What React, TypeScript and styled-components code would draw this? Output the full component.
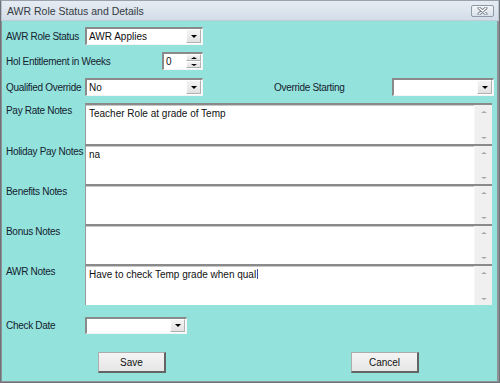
import styled, { createGlobalStyle } from 'styled-components';

const GlobalStyle = createGlobalStyle`
  html, body {
    margin: 0;
    padding: 0;
    background: #ffffff;
  }
  body {
    font-family: 'Liberation Sans', Arial, sans-serif;
  }
`;

const Window = styled.div`
  width: 500px;
  height: 383px;
  box-sizing: border-box;
  display: flex;
  flex-direction: column;
  border: 1px solid #6f7378;
  border-top-color: #9aa3ad;
  background: #93e2dc;
  overflow: hidden;
`;

const TitleBar = styled.div`
  height: 19px;
  flex: none;
  display: flex;
  align-items: center;
  justify-content: space-between;
  padding: 0 4px 0 5px;
  background: linear-gradient(#e6ecf3, #d3dde8);
  border-bottom: 1px solid #c0ccd8;
  border-left: 1px solid #b9c3cd;
  border-right: 1px solid #b9c3cd;
`;

const Title = styled.span`
  font-size: 10.5px;
  color: #333a42;
`;

const CloseButton = styled.div`
  width: 23px;
  height: 12px;
  box-sizing: border-box;
  border: 1px solid #8d9aa8;
  border-radius: 2px;
  background: linear-gradient(#f3f6f9, #d9e1ea);
  display: flex;
  align-items: center;
  justify-content: center;
`;

const Body = styled.div`
  flex: 1;
  display: flex;
  flex-direction: column;
  padding: 6px 4px 0 4px;
  border-left: 1px solid #8e9296;
  border-right: 2px solid #8e9296;
  border-bottom: 1px solid #8e9296;
`;

const Row = styled.div<{ $top?: number }>`
  display: flex;
  align-items: center;
  height: 18px;
  margin-top: ${(p) => p.$top ?? 0}px;
`;

const Label = styled.div<{ $width: number; $left?: number }>`
  width: ${(p) => p.$width}px;
  margin-left: ${(p) => p.$left ?? 0}px;
  flex: none;
  font-size: 10px;
  letter-spacing: -0.3px;
  color: #14232f;
  white-space: nowrap;
`;

const Sunken = styled.div<{ $width: number; $height?: number }>`
  width: ${(p) => p.$width}px;
  height: ${(p) => p.$height ?? 18}px;
  box-sizing: border-box;
  flex: none;
  display: flex;
  align-items: stretch;
  background: #ffffff;
  border-top: 2px solid #8a8a8a;
  border-left: 2px solid #8a8a8a;
  border-right: 1px solid #f4f4f4;
  border-bottom: 1px solid #f4f4f4;
`;

const FieldText = styled.div`
  flex: 1;
  font-size: 10px;
  color: #111;
  padding-left: 2px;
  display: flex;
  align-items: center;
  overflow: hidden;
  white-space: nowrap;
`;

const DropButton = styled.div`
  width: 15px;
  flex: none;
  margin: 0 1px 1px 0;
  box-sizing: border-box;
  background: linear-gradient(#f4f4f4, #e2e2e2);
  border: 1px solid #b0b0b0;
  border-top-color: #fdfdfd;
  border-left-color: #fdfdfd;
  display: flex;
  align-items: center;
  justify-content: center;
`;

const SpinButtons = styled.div`
  width: 15px;
  flex: none;
  margin: 0 1px 1px 0;
  display: flex;
  flex-direction: column;
`;

const SpinHalf = styled.div`
  flex: 1;
  box-sizing: border-box;
  background: linear-gradient(#f4f4f4, #e2e2e2);
  border: 1px solid #b0b0b0;
  border-top-color: #fdfdfd;
  border-left-color: #fdfdfd;
  display: flex;
  align-items: center;
  justify-content: center;
`;

const Arrow = styled.div<{ $up?: boolean; $color?: string; $size?: number }>`
  width: 0;
  height: 0;
  border-left: ${(p) => p.$size ?? 3.5}px solid transparent;
  border-right: ${(p) => p.$size ?? 3.5}px solid transparent;
  ${(p) =>
    p.$up
      ? `border-bottom: ${(p.$size ?? 3.5) - 0.5}px solid ${p.$color ?? '#000'};`
      : `border-top: ${(p.$size ?? 3.5) - 0.5}px solid ${p.$color ?? '#000'};`}
`;

const NotesList = styled.div`
  display: flex;
  flex-direction: column;
  margin-top: 7px;
`;

const NoteRow = styled.div<{ $height: number }>`
  display: flex;
  height: ${(p) => p.$height}px;
`;

const NoteLabel = styled(Label)`
  padding-top: 2px;
`;

const NoteBox = styled.div`
  flex: 1;
  margin-right: 1px;
  display: flex;
  background: #ffffff;
  border-top: 2px solid #8a8a8a;
  border-left: 1px solid #9a9a9a;
  box-shadow: inset 0 1px 0 #c8c8c8;
`;

const NoteText = styled.div`
  flex: 1;
  font-size: 10px;
  color: #111;
  padding: 3px 0 0 3px;
  white-space: nowrap;
`;

const Caret = styled.span`
  display: inline-block;
  width: 1px;
  height: 10px;
  margin-left: 1px;
  vertical-align: -1px;
  background: #3a55a0;
`;

const ScrollBar = styled.div`
  width: 17px;
  flex: none;
  background: #f0f0f0;
  border-left: 1px solid #f7f7f7;
  display: flex;
  flex-direction: column;
  justify-content: space-between;
  align-items: center;
  padding: 6px 0 5px;
`;

const ButtonRow = styled.div`
  display: flex;
  margin-top: 18px;
  padding-left: 92px;
  gap: 185px;
`;

const Button = styled.div`
  width: 68px;
  height: 21px;
  box-sizing: border-box;
  background: linear-gradient(#f4f4f4, #e6e6e6);
  border: 1px solid #adadad;
  border-right: 2px solid #646464;
  border-bottom: 2px solid #646464;
  display: flex;
  align-items: center;
  justify-content: center;
  font-size: 10px;
  color: #111;
`;

const Combo = ({ width, value, height }: { width: number; value?: string; height?: number }) => (
  <Sunken $width={width} $height={height}>
    <FieldText>{value}</FieldText>
    <DropButton>
      <Arrow />
    </DropButton>
  </Sunken>
);

const notes = [
  { label: 'Pay Rate Notes', text: 'Teacher Role at grade of Temp', height: 41 },
  { label: 'Holiday Pay Notes', text: 'na', height: 40 },
  { label: 'Benefits Notes', text: '', height: 40 },
  { label: 'Bonus Notes', text: '', height: 40 },
  { label: 'AWR Notes', text: 'Have to check Temp grade when qual', height: 41, caret: true },
];

const App = () => (
  <>
    <GlobalStyle />
    <Window>
      <TitleBar>
        <Title>AWR Role Status and Details</Title>
        <CloseButton>
          <svg width="11" height="8" viewBox="0 0 11 8">
            <path d="M2 1 L9 7 M9 1 L2 7" stroke="#6f7b88" strokeWidth="3" strokeLinecap="round" />
            <path d="M2 1 L9 7 M9 1 L2 7" stroke="#ffffff" strokeWidth="1.4" strokeLinecap="round" />
          </svg>
        </CloseButton>
      </TitleBar>
      <Body>
        <Row>
          <Label $width={79}>AWR Role Status</Label>
          <Combo width={118} value="AWR Applies" />
        </Row>
        <Row $top={7}>
          <Label $width={156}>Hol Entitlement in Weeks</Label>
          <Sunken $width={41}>
            <FieldText>0</FieldText>
            <SpinButtons>
              <SpinHalf>
                <Arrow $up $size={3} />
              </SpinHalf>
              <SpinHalf>
                <Arrow $size={3} />
              </SpinHalf>
            </SpinButtons>
          </Sunken>
        </Row>
        <Row $top={8}>
          <Label $width={79}>Qualified Override</Label>
          <Combo width={118} value="No" />
          <Label $width={118} $left={71}>Override Starting</Label>
          <Combo width={102} />
        </Row>
        <NotesList>
          {notes.map((n) => (
            <NoteRow key={n.label} $height={n.height}>
              <NoteLabel $width={79}>{n.label}</NoteLabel>
              <NoteBox>
                <NoteText>
                  {n.text}
                  {n.caret && <Caret />}
                </NoteText>
                <ScrollBar>
                  <Arrow $up $size={3} $color="#a8a8a8" />
                  <Arrow $size={3} $color="#a8a8a8" />
                </ScrollBar>
              </NoteBox>
            </NoteRow>
          ))}
        </NotesList>
        <Row $top={11}>
          <Label $width={79}>Check Date</Label>
          <Combo width={102} height={17} />
        </Row>
        <ButtonRow>
          <Button>Save</Button>
          <Button>Cancel</Button>
        </ButtonRow>
      </Body>
    </Window>
  </>
);

export default App;
